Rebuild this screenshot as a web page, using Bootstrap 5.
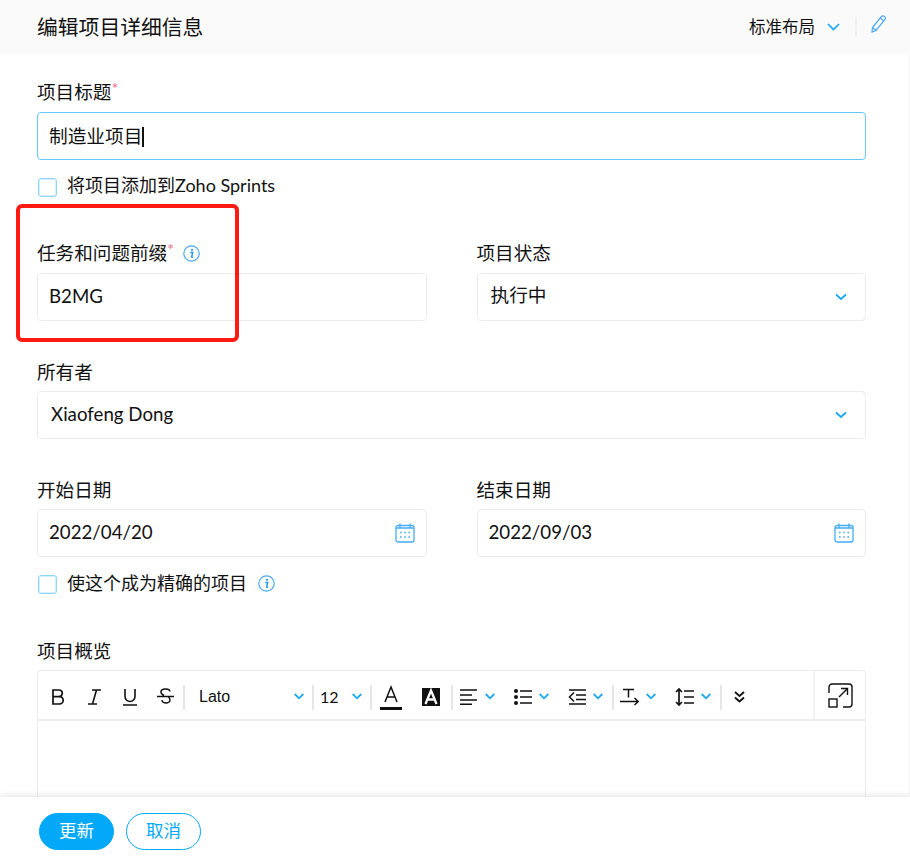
<!doctype html>
<html lang="zh-CN">
<head>
<meta charset="utf-8">
<title>编辑项目详细信息</title>
<link rel="stylesheet" href="https://cdn.jsdelivr.net/npm/bootstrap@5.3.0/dist/css/bootstrap.min.css">
<style>
html,body{height:857px;overflow:hidden}
body{font-family:Lato,"Noto Sans CJK SC",sans-serif;color:#111;background:#fff}
.shell{height:857px}
.top-bar{height:54px;background:#fafafa;padding:0 23px 0 37px;flex:none}
.top-title{font-size:20.8px;line-height:54px}
.layout-pick{font-size:16.5px;line-height:54px;width:66px}
.top-sep{width:2px;height:20px;background:#f0f0f0;margin:0 14px 0 15px}
.chev-top{margin-left:12px}
.scroll-area{flex:1 1 auto;min-height:0;overflow:hidden;padding:0 43px 0 37px;position:relative;border-right:1px solid #f5f5f5}
.fld-label{font-size:18.6px;line-height:24px;margin:0;height:24px}
.req{color:#f56a84;font-size:16px;vertical-align:5px;line-height:0}
.fld{height:48px;border:1px solid #ececec;border-radius:4px;padding:0 11px;font-size:18.7px;line-height:44px;color:#111;background:#fff;margin-top:-1px}
.fld-focus{border-color:#64c8fb;line-height:46px}
.caret-bar{display:inline-block;width:2px;height:20px;background:#111;vertical-align:-4px}
.check-box{width:19px;height:19px;border:1px solid #8ed5fb;box-shadow:inset 0 0 0 1px #d5f0fe;border-radius:3px;flex:none;background:#fff;margin-left:1px}
.check-row{font-size:18px;line-height:24px;gap:11px}
.check-row .check-box{margin-right:-1px}
.two-col{display:grid;grid-template-columns:1fr 1fr;column-gap:50px}
.fld-pick{padding-left:13px;padding-right:18px;padding-bottom:4px}
.fld-pick svg{margin-top:4px}
.fld-low{padding-bottom:2px}
.fld-low svg{margin-top:2px}
.editor-wrap{border:1px solid #ececec;border-bottom:0;border-radius:4px 4px 0 0;height:130px;margin-top:-1px}
.tool-row{height:50px;border-bottom:2px solid #ededed;padding-left:2px}
.cell{height:48px;flex:none;padding-top:3px}
.c36{width:36px}
.tsep{width:2px;height:25px;background:#e6e6e6;flex:none;margin-top:4px}
.font-pick{width:127px;padding-right:8px;padding-left:14px;font-family:"Liberation Sans",Arial,sans-serif;font-size:16px}
.size-pick{width:56px;padding-right:8px;padding-left:6px;font-size:16px;font-family:Lato,sans-serif}
.c35{width:35px}.c38{width:38px}.c41{width:41px}.c52{width:52px}.c54{width:54px}.c53{width:53px}
.expand-cell{width:52px;border-left:2px solid #f2f2f2;padding-top:1px}
.foot-bar{height:60px;flex:none;background:#fff;box-shadow:0 -2px 6px rgba(0,0,0,.09);padding:16px 0 0 39px;gap:12px;position:relative;z-index:2}
.act-btn{width:75px;height:37px;border-radius:19px;font-size:17.5px;line-height:33px;padding:0 0 2px;border:1px solid #03a9f8}
.act-save{background:#03a9f8;color:#fff}
.act-cancel{background:#fff;color:#03a9f8}
.red-mark{position:absolute;left:16px;top:204px;width:223px;height:138px;border:4px solid #ff1a12;border-radius:6px;pointer-events:none;z-index:3}
.info-i{flex:none}
</style>
</head>
<body>
<div class="shell d-flex flex-column position-relative">
  <div class="top-bar d-flex align-items-center">
    <div class="top-title">编辑项目详细信息</div>
    <div class="ms-auto d-flex align-items-center">
      <span class="layout-pick">标准布局</span>
      <svg class="chev-top" width="13" height="8" viewBox="0 0 13 8" fill="none" stroke="#1aa7f5" stroke-width="1.7"><path d="M1 1l5.500 5.500L12 1"/></svg>
      <span class="top-sep"></span>
      <svg width="16" height="20" viewBox="0 0 16 20" fill="none" stroke="#4ba9f5" stroke-width="1.2" style="margin-top:-7px"><path d="M1.500 13.500L10.500 2.500a1.700 1.700 0 0 1 2.500-.3l.8.7a1.700 1.700 0 0 1 .2 2.400L5 16.500l-4 1.500zM9.300 4l3.900 3.100M1.500 13.500L5 16.500"/></svg>
    </div>
  </div>

  <div class="scroll-area">
    <div style="height:26px"></div>
    <p class="fld-label">项目标题<span class="req">*</span></p>
    <div style="height:9px"></div>
    <div class="fld fld-focus">制造业项目<span class="caret-bar"></span></div>
    <div class="d-flex align-items-center check-row" style="margin-top:15px;height:24px"><span class="check-box"></span><span style="margin-top:-5px">将项目添加到Zoho Sprints</span></div>

    <div class="two-col" style="margin-top:42px">
      <div>
        <p class="fld-label d-flex align-items-center"><span>任务和问题前缀<span class="req">*</span></span>
          <svg class="info-i" style="margin-left:9px" width="17" height="17" viewBox="0 0 17 17"><circle cx="8.500" cy="8.500" r="7.700" fill="none" stroke="#4ba9f5" stroke-width="1.200"/><circle cx="9" cy="4.800" r="1.100" fill="#1f9bf0"/><path d="M7.200 7.400h2.500L8.700 11.900c-.1.500.3.600 1.300.2" fill="none" stroke="#1f9bf0" stroke-width="1.500"/></svg>
        </p>
        <div style="height:9px"></div>
        <div class="fld">B2MG</div>
      </div>
      <div>
        <p class="fld-label">项目状态</p>
        <div style="height:9px"></div>
        <div class="fld fld-pick d-flex align-items-center justify-content-between">执行中
          <svg width="12" height="8" viewBox="0 0 12 8" fill="none" stroke="#1aa7f5" stroke-width="1.800"><path d="M1 1.500l5 4.500 5-4.500"/></svg>
        </div>
      </div>
    </div>

    <p class="fld-label" style="margin-top:39px">所有者</p>
    <div style="height:8px"></div>
    <div class="fld fld-low d-flex align-items-center justify-content-between" style="padding-left:13px;padding-right:18px">Xiaofeng Dong
      <svg width="12" height="8" viewBox="0 0 12 8" fill="none" stroke="#1aa7f5" stroke-width="1.800"><path d="M1 1.500l5 4.500 5-4.500"/></svg>
    </div>

    <div class="two-col" style="margin-top:39px">
      <div>
        <p class="fld-label">开始日期</p>
        <div style="height:8px"></div>
        <div class="fld fld-low d-flex align-items-center justify-content-between">2022/04/20
          <svg width="20" height="20" viewBox="0 0 20 20" fill="none" stroke="#45acf7" stroke-width="1.300"><rect x="1" y="2.500" width="18" height="16.500" rx="2"/><path d="M5 .5v4M15 .5v4M1 5h18"/><path d="M5 9.500h1.600M9.200 9.500h1.600M13.400 9.500h1.600M5 14h1.600M9.200 14h1.600M13.400 14h1.600" stroke-width="1.600"/></svg>
        </div>
      </div>
      <div>
        <p class="fld-label">结束日期</p>
        <div style="height:8px"></div>
        <div class="fld fld-low d-flex align-items-center justify-content-between">2022/09/03
          <svg width="20" height="20" viewBox="0 0 20 20" fill="none" stroke="#45acf7" stroke-width="1.300"><rect x="1" y="2.500" width="18" height="16.500" rx="2"/><path d="M5 .5v4M15 .5v4M1 5h18"/><path d="M5 9.500h1.600M9.200 9.500h1.600M13.400 9.500h1.600M5 14h1.600M9.200 14h1.600M13.400 14h1.600" stroke-width="1.600"/></svg>
        </div>
      </div>
    </div>

    <div class="d-flex align-items-center check-row" style="margin-top:15px;height:24px"><span class="check-box"></span><span style="margin-top:-2px">使这个成为精确的项目</span>
      <svg class="info-i" width="17" height="17" viewBox="0 0 17 17" style="margin-top:-1px"><circle cx="8.500" cy="8.500" r="7.700" fill="none" stroke="#4ba9f5" stroke-width="1.200"/><circle cx="9" cy="4.800" r="1.100" fill="#1f9bf0"/><path d="M7.200 7.400h2.500L8.700 11.900c-.1.500.3.600 1.300.2" fill="none" stroke="#1f9bf0" stroke-width="1.500"/></svg>
    </div>

    <p class="fld-label" style="margin-top:43px">项目概览</p>
    <div style="height:8px"></div>
    <div class="editor-wrap">
      <div class="tool-row d-flex align-items-center">
        <div class="cell c36 d-flex align-items-center justify-content-center"><svg width="14" height="16" viewBox="0 0 14 16" fill="none" stroke="#111" stroke-width="1.700"><path d="M2 1h6a3.300 3.300 0 0 1 0 6.600H2zM2 7.600h6.500a3.700 3.700 0 0 1 0 7.400H2z"/></svg></div>
        <div class="cell c36 d-flex align-items-center justify-content-center"><svg width="15" height="16" viewBox="0 0 15 16" fill="none" stroke="#111" stroke-width="1.600"><path d="M5 1h9M1 15h9M9.500 1l-4 14"/></svg></div>
        <div class="cell c36 d-flex align-items-center justify-content-center"><svg width="16" height="18" viewBox="0 0 16 18" fill="none" stroke="#111" stroke-width="1.600"><path d="M3 1v7.500a5 5 0 0 0 10 0V1M1 17h14"/></svg></div>
        <div class="cell c35 d-flex align-items-center justify-content-center"><svg width="17" height="18" viewBox="0 0 17 18" fill="none" stroke="#111" stroke-width="1.500"><path d="M13 3.500A4.500 2.800 0 0 0 4 4c0 1.500 1 2.500 3 3.500M5 12a4 3 0 0 0 8 0c0-1.500-.8-2.500-2-3.500M0 8.500h17"/></svg></div>
        <span class="tsep"></span>
        <div class="cell font-pick d-flex align-items-center justify-content-between">Lato<svg width="10" height="7" viewBox="0 0 10 7" fill="none" stroke="#1aa7f5" stroke-width="1.800"><path d="M.7 1l4.300 4.300L9.300 1"/></svg></div>
        <span class="tsep"></span>
        <div class="cell size-pick d-flex align-items-center justify-content-between">12<svg width="10" height="7" viewBox="0 0 10 7" fill="none" stroke="#1aa7f5" stroke-width="1.800"><path d="M.7 1l4.300 4.300L9.300 1"/></svg></div>
        <span class="tsep"></span>
        <div class="cell c38 d-flex align-items-center justify-content-center"><svg width="22" height="25" viewBox="0 0 22 25" fill="none" stroke="#111" stroke-width="1.500" style="margin-top:1px"><path d="M5 17L11 2l6 15M7 12h8"/><path d="M0 23.500h22" stroke-width="3"/></svg></div>
        <div class="cell c41 d-flex align-items-center justify-content-center"><svg width="18" height="18" viewBox="0 0 18 18"><rect width="18" height="18" fill="#111"/><path d="M3.500 16L9 2.500 14.500 16M5.500 11.500h7" fill="none" stroke="#fff" stroke-width="2.300"/></svg></div>
        <span class="tsep"></span>
        <div class="cell c52 d-flex align-items-center" style="padding-left:7px;gap:8px"><svg width="17" height="16" viewBox="0 0 17 16" stroke="#111" stroke-width="1.500"><path d="M0 1h17M0 6h12M0 11h17M0 15.200h12"/></svg><svg width="10" height="7" viewBox="0 0 10 7" fill="none" stroke="#1aa7f5" stroke-width="1.800"><path d="M.7 1l4.300 4.300L9.300 1"/></svg></div>
        <div class="cell c54 d-flex align-items-center" style="padding-left:9px;gap:7px"><svg width="18" height="16" viewBox="0 0 18 16"><circle cx="2" cy="2" r="2" fill="#111"/><circle cx="2" cy="8" r="2" fill="#111"/><circle cx="2" cy="14" r="2" fill="#111"/><path d="M6 2h12M6 8h12M6 14h12" stroke="#111" stroke-width="1.500"/></svg><svg width="10" height="7" viewBox="0 0 10 7" fill="none" stroke="#1aa7f5" stroke-width="1.800"><path d="M.7 1l4.300 4.300L9.300 1"/></svg></div>
        <div class="cell c53 d-flex align-items-center" style="padding-left:9px;gap:7px"><svg width="18" height="16" viewBox="0 0 18 16" fill="none" stroke="#111" stroke-width="1.500"><path d="M1 1h17M8 6h10M8 10.500h10M1 15h17M6 3.500L1.500 8 6 12.500"/></svg><svg width="10" height="7" viewBox="0 0 10 7" fill="none" stroke="#1aa7f5" stroke-width="1.800"><path d="M.7 1l4.300 4.300L9.300 1"/></svg></div>
        <span class="tsep"></span>
        <div class="cell c53 d-flex align-items-center" style="padding-left:6px;gap:7px"><svg width="19" height="18" viewBox="0 0 19 18" fill="none" stroke="#111" stroke-width="1.500"><path d="M3 1.500h11M8.500 1.500v8M0 13.500h18M14.500 10l3.800 3.500-3.800 3.500"/></svg><svg width="10" height="7" viewBox="0 0 10 7" fill="none" stroke="#1aa7f5" stroke-width="1.800"><path d="M.7 1l4.300 4.300L9.300 1"/></svg></div>
        <div class="cell c53 d-flex align-items-center" style="padding-left:8px;gap:7px"><svg width="19" height="18" viewBox="0 0 19 18" fill="none" stroke="#111" stroke-width="1.500"><path d="M4 1v16M1 4l3-3 3 3M1 14l3 3 3-3" stroke-width="1.700"/><path d="M9 3h10M9 9h10M9 15h10"/></svg><svg width="10" height="7" viewBox="0 0 10 7" fill="none" stroke="#1aa7f5" stroke-width="1.800"><path d="M.7 1l4.300 4.300L9.300 1"/></svg></div>
        <span class="tsep"></span>
        <div class="cell c35 d-flex align-items-center justify-content-center"><svg width="11" height="12" viewBox="0 0 11 12" fill="none" stroke="#111" stroke-width="1.800"><path d="M1 1l4.500 4L10 1M1 6.500l4.500 4 4.500-4"/></svg></div>
        <div class="cell expand-cell ms-auto d-flex align-items-center justify-content-center"><svg width="25" height="25" viewBox="0 0 25 25" fill="none" stroke="#111" stroke-width="1.400"><path d="M1 10V4a3 3 0 0 1 3-3h17a3 3 0 0 1 3 3v17a3 3 0 0 1-3 3h-6"/><rect x="1" y="16" width="8" height="8"/><path d="M11 14l8-8M13 5.500h6.500V12"/></svg></div>
      </div>
    </div>
  </div>

  <div class="foot-bar d-flex">
    <button type="button" class="btn act-btn act-save">更新</button>
    <button type="button" class="btn act-btn act-cancel">取消</button>
  </div>

  <div class="red-mark"></div>
</div>
<script src="https://cdn.jsdelivr.net/npm/bootstrap@5.3.0/dist/js/bootstrap.bundle.min.js"></script>
</body>
</html>
